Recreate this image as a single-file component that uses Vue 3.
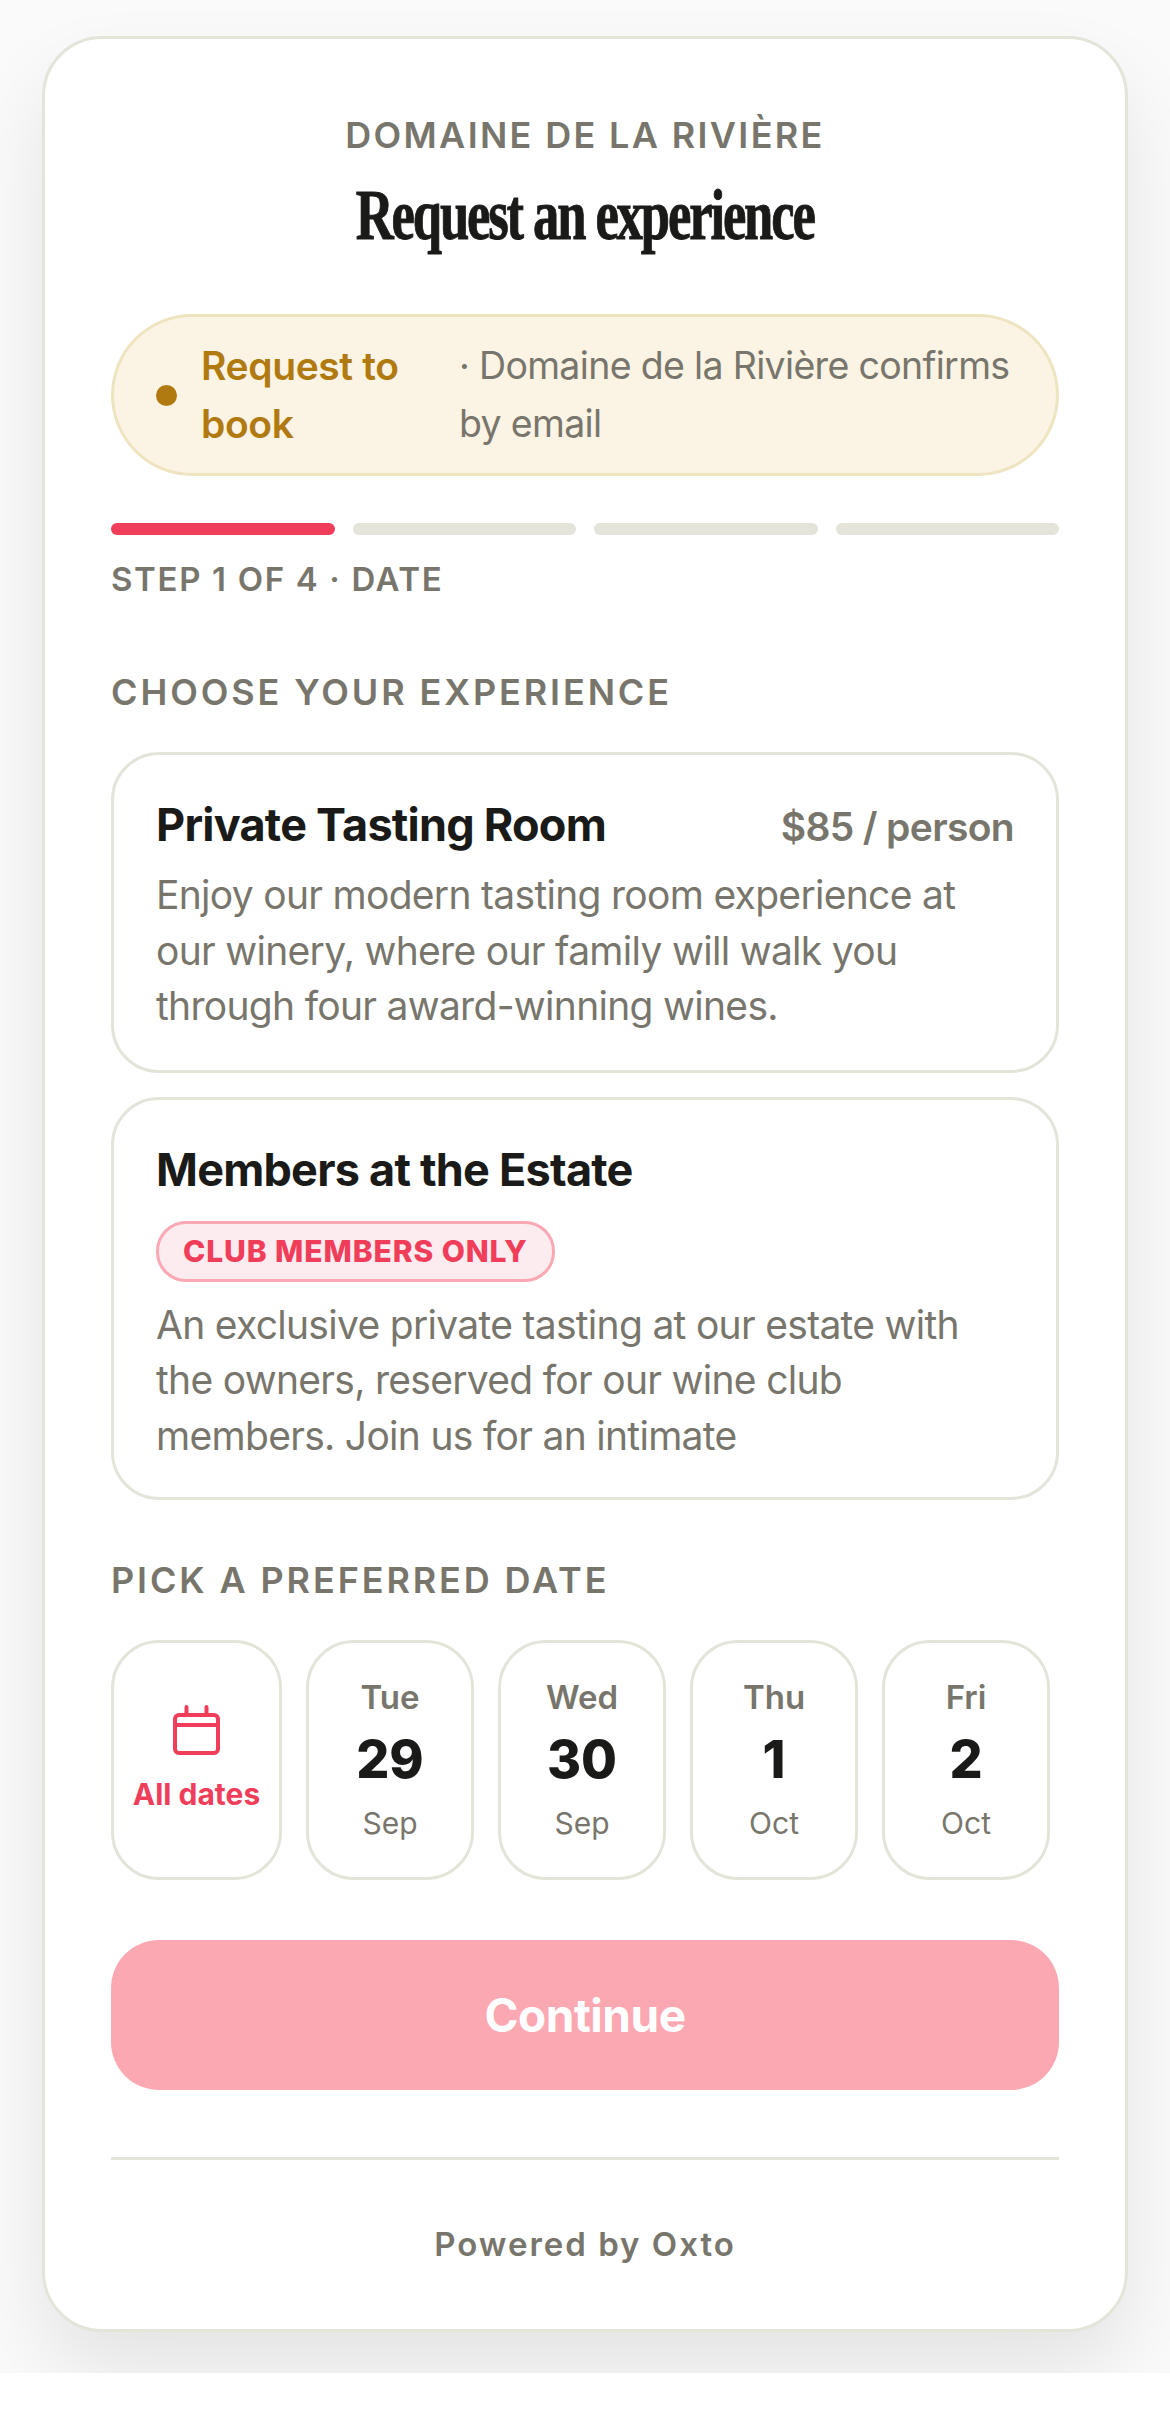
<template>
  <div class="page">
    <div class="sheet">
      <header class="head">
        <div class="winery">DOMAINE DE LA RIVIÈRE</div>
        <h1 class="title">Request an experience</h1>
      </header>

      <div class="notice">
        <span class="notice-dot"></span>
        <strong class="notice-strong">Request to book</strong>
        <span class="notice-text">· Domaine de la Rivière confirms by email</span>
      </div>

      <div class="steps">
        <span v-for="n in 4" :key="n" class="step" :class="{ on: n === 1 }"></span>
      </div>
      <div class="step-label">STEP 1 OF 4 · DATE</div>

      <div class="section-label first">CHOOSE YOUR EXPERIENCE</div>
      <div class="options">
        <div v-for="item in experiences" :key="item.name" class="option" :class="{ members: item.badge }">
          <div class="option-top">
            <span class="option-name">{{ item.name }}</span>
            <span v-if="item.price" class="option-price">{{ item.price }}</span>
          </div>
          <span v-if="item.badge" class="badge">{{ item.badge }}</span>
          <p class="option-desc">{{ item.desc }}</p>
        </div>
      </div>

      <div class="section-label second">PICK A PREFERRED DATE</div>
      <div class="dates">
        <div class="date all">
          <svg class="cal" viewBox="0 0 47 50" fill="none" stroke="currentColor" stroke-width="4" stroke-linecap="round" stroke-linejoin="round">
            <rect x="2" y="10" width="43" height="38" rx="4" />
            <path d="M2 20h43M13.5 2v7M33.5 2v7" />
          </svg>
          <span class="all-label">All dates</span>
        </div>
        <div v-for="d in days" :key="d.day + d.num" class="date">
          <span class="day">{{ d.day }}</span>
          <span class="num">{{ d.num }}</span>
          <span class="month">{{ d.month }}</span>
        </div>
      </div>

      <button class="continue" type="button">Continue</button>

      <footer class="foot">Powered by Oxto</footer>
    </div>
  </div>
</template>

<script setup>
const experiences = [
  {
    name: 'Private Tasting Room',
    price: '$85 / person',
    desc: 'Enjoy our modern tasting room experience at our winery, where our family will walk you through four award-winning wines.'
  },
  {
    name: 'Members at the Estate',
    badge: 'CLUB MEMBERS ONLY',
    desc: 'An exclusive private tasting at our estate with the owners, reserved for our wine club members. Join us for an intimate'
  }
]

const days = [
  { day: 'Tue', num: '29', month: 'Sep' },
  { day: 'Wed', num: '30', month: 'Sep' },
  { day: 'Thu', num: '1', month: 'Oct' },
  { day: 'Fri', num: '2', month: 'Oct' }
]
</script>

<style>
html, body {
  background: #fff;
}
</style>

<style scoped>
.page {
  background: #fafafa;
  padding: 36px 42px 41px;
  overflow: hidden;
  font-family: Inter, "Liberation Sans", sans-serif;
  color: #1a1a18;
}

.sheet {
  background: #fff;
  border: 3px solid #e4e4da;
  border-radius: 60px;
  padding: 72px 66px 64px;
  box-shadow: 0 40px 80px rgba(0, 0, 0, 0.09);
}

.head {
  text-align: center;
}

.winery {
  font-size: 36px;
  line-height: 48px;
  font-weight: 600;
  letter-spacing: 0.065em;
  color: #78766c;
}

.title {
  display: inline-block;
  margin: 20px 0 0;
  font-family: "Liberation Serif", serif;
  font-size: 72px;
  line-height: 72px;
  font-weight: 700;
  letter-spacing: -0.04em;
  white-space: nowrap;
  transform: scaleX(0.73);
  -webkit-text-stroke: 1px #1a1a18;
  color: #1a1a18;
}

.notice {
  display: flex;
  align-items: center;
  gap: 24px;
  margin-top: 63px;
  padding: 20px 36px 20px 42px;
  background: #fbf3e3;
  border: 3px solid #efe4c0;
  border-radius: 90px;
  font-size: 37.5px;
  line-height: 58px;
}

.notice-dot {
  flex: none;
  width: 21px;
  height: 21px;
  border-radius: 50%;
  background: #b07a10;
}

.notice-strong {
  flex: 0 0 234px;
  font-size: 39px;
  font-weight: 600;
  letter-spacing: -0.01em;
  color: #b07a10;
}

.notice-text {
  letter-spacing: -0.018em;
  color: #78766c;
}

.steps {
  display: flex;
  gap: 18px;
  margin-top: 47px;
}

.step {
  flex: 1;
  height: 12px;
  border-radius: 6px;
  background: #e4e4da;
}

.step.on {
  background: #f03e5a;
}

.step-label {
  margin-top: 20px;
  font-size: 33px;
  line-height: 48px;
  font-weight: 600;
  letter-spacing: 0.05em;
  color: #78766c;
}

.section-label {
  font-size: 36px;
  line-height: 48px;
  font-weight: 600;
  letter-spacing: 0.08em;
  color: #78766c;
}

.section-label.first {
  margin-top: 65px;
}

.section-label.second {
  margin-top: 56px;
}

.options {
  display: flex;
  flex-direction: column;
  gap: 24px;
  margin-top: 36px;
}

.option {
  border: 3px solid #e4e4da;
  border-radius: 48px;
  padding: 43px 42px 36px;
}

.option.members {
  padding-bottom: 34px;
}

.option-top {
  display: flex;
  justify-content: space-between;
  align-items: baseline;
}

.option-name {
  font-size: 45px;
  line-height: 54px;
  font-weight: 700;
  letter-spacing: -0.017em;
}

.option-price {
  font-size: 39px;
  font-weight: 600;
  letter-spacing: -0.017em;
  color: #78766c;
}

.badge {
  display: inline-block;
  margin-top: 24px;
  padding: 6px 24px;
  background: #fdecef;
  border: 3px solid #f9a8b4;
  border-radius: 30px;
  font-size: 30px;
  line-height: 43px;
  font-weight: 800;
  letter-spacing: 0.03em;
  color: #f03e5a;
}

.option-desc {
  margin: 15px 0 0;
  font-size: 39px;
  line-height: 55.5px;
  letter-spacing: -0.018em;
  color: #78766c;
}

.dates {
  display: flex;
  gap: 24px;
  margin-top: 36px;
}

.date {
  flex: none;
  box-sizing: border-box;
  width: 168px;
  height: 240px;
  display: flex;
  flex-direction: column;
  align-items: center;
  justify-content: center;
  border: 3px solid #e4e4da;
  border-radius: 48px;
}

.date.all {
  width: 171px;
  color: #f03e5a;
}

.cal {
  width: 47px;
  height: 50px;
}

.all-label {
  margin-top: 18px;
  font-size: 30px;
  line-height: 42px;
  font-weight: 700;
}

.day {
  font-size: 33px;
  line-height: 42px;
  font-weight: 600;
  color: #78766c;
}

.num {
  margin-top: 9px;
  font-size: 52px;
  line-height: 66px;
  font-weight: 800;
}

.month {
  margin-top: 9px;
  font-size: 30px;
  line-height: 42px;
  color: #78766c;
}

.continue {
  display: block;
  width: 100%;
  height: 150px;
  margin-top: 60px;
  border: 0;
  border-radius: 48px;
  background: #fba8b2;
  color: #fff;
  font-family: inherit;
  font-size: 46px;
  font-weight: 700;
  letter-spacing: -0.01em;
}

.foot {
  margin-top: 67px;
  padding-top: 63px;
  border-top: 3px solid #e4e4da;
  text-align: center;
  font-size: 33px;
  line-height: 42px;
  font-weight: 600;
  letter-spacing: 0.06em;
  color: #78766c;
}
</style>
